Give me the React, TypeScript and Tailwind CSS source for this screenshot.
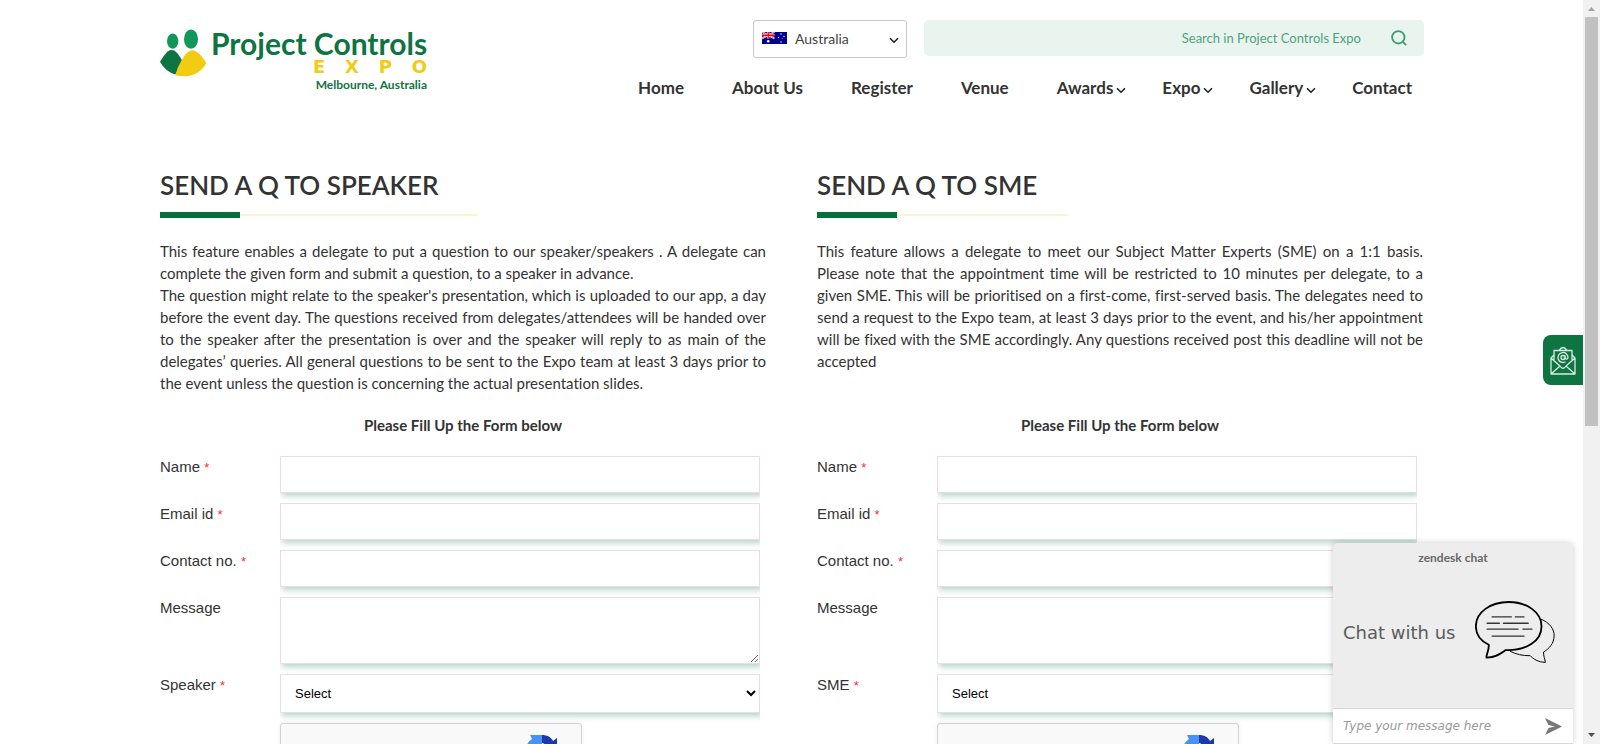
import React from "react";

const LATO = "font-['Lato',sans-serif] [font-variant-ligatures:no-common-ligatures]";
const ARIAL = "font-['Liberation_Sans',sans-serif]";
const VERDANA = "font-['DejaVu_Sans',sans-serif]";

const FIELD =
  "block w-full rounded-none border border-[#ecdcdf] bg-white shadow-[2px_3px_6px_rgba(5,120,75,0.3)] outline-none";

function Logo() {
  return (
    <a href="#home" className="mt-7 flex shrink-0 gap-1" aria-label="Project Controls Expo">
      <svg viewBox="0 0 141 146" className="mt-px h-[49px] w-[47px]" aria-hidden="true">
        <ellipse cx="38" cy="36" rx="17" ry="23" fill="#12975a" />
        <ellipse cx="93" cy="30" rx="21" ry="29" fill="#12975a" />
        <path d="M0 98Q15 72 24 66Q34 60 44 65Q58 76 68 98L46 136Q16 128 0 98Z" fill="#0d7442" />
        <path d="M46 138Q52 115 64 95Q76 72 88 66Q98 61 107 66Q126 78 139 102C120 136 85 148 46 138Z" fill="#f2cb13" />
      </svg>
      <span className="flex w-[216px] flex-col">
        <span className="text-[30px] leading-[30px] font-bold whitespace-nowrap text-[#0d7442]">Project Controls</span>
        <span className="flex w-[114px] justify-between self-end font-['DejaVu_Sans',sans-serif] text-lg leading-[18px] font-bold text-[#f2cb13]">
          <span>E</span>
          <span>X</span>
          <span>P</span>
          <span>O</span>
        </span>
        <span className="self-end text-xs leading-[18px] font-bold whitespace-nowrap text-[#0d7442]">Melbourne, Australia</span>
      </span>
    </a>
  );
}

function Chevron({ className }: { className: string }) {
  return (
    <svg viewBox="0 0 10 7" className={className} fill="none" stroke="#222" strokeWidth="1.6" aria-hidden="true">
      <path d="M1 1.2L5 5.2L9 1.2" />
    </svg>
  );
}

function Flag() {
  return (
    <svg viewBox="0 0 50 24" className="h-3 w-[25px]" aria-hidden="true">
      <rect width="50" height="24" fill="#00008b" />
      <path d="M0 0L25 13M25 0L0 13" stroke="#fff" strokeWidth="3.4" />
      <path d="M0 0L25 13M25 0L0 13" stroke="#f33" strokeWidth="1.4" />
      <path d="M12.5 0V13M0 6.5H25" stroke="#fff" strokeWidth="4.4" />
      <path d="M12.5 0V13M0 6.5H25" stroke="#f00" strokeWidth="2.6" />
      <circle cx="12.5" cy="18.5" r="2.6" fill="#fff" />
      <circle cx="38" cy="4" r="1.4" fill="#fff" />
      <circle cx="38" cy="20" r="1.4" fill="#fff" />
      <circle cx="33" cy="11" r="1.4" fill="#fff" />
      <circle cx="44" cy="9" r="1.4" fill="#fff" />
      <circle cx="40.5" cy="13" r="0.9" fill="#fff" />
    </svg>
  );
}

const NAV = [
  { label: "Home" },
  { label: "About Us" },
  { label: "Register" },
  { label: "Venue" },
  { label: "Awards", menu: true },
  { label: "Expo", menu: true },
  { label: "Gallery", menu: true },
  { label: "Contact" },
];

function Header() {
  return (
    <header className="flex justify-between pr-[159px] pl-40">
      <Logo />
      <div className="flex flex-col items-end pt-5">
        <div className="flex gap-[17px]">
          <div className="relative h-[38px] w-[154px]">
            <select
              aria-label="Country"
              className="h-full w-full appearance-none rounded-[3px] border border-[#c8c8c8] bg-white pl-[41px] text-sm text-[#444] outline-none"
            >
              <option>Australia</option>
            </select>
            <span className="pointer-events-none absolute top-3 left-[9px]"><Flag /></span>
            <Chevron className="pointer-events-none absolute top-[17px] right-2 h-[7px] w-[10px]" />
          </div>
          <form className="flex h-9 w-[500px] items-center rounded-[5px] bg-[#eaf4ef]" role="search">
            <input
              aria-label="Search"
              placeholder="Search in Project Controls Expo"
              className="h-full min-w-0 flex-1 bg-transparent text-right text-[13px] text-[#3f9b73] outline-none placeholder:text-[#4da37e]"
            />
            <button type="button" aria-label="Search" className="mr-[17px] ml-[30px]">
              <svg viewBox="0 0 16 16" className="size-4" fill="none" stroke="#3f9b73" strokeWidth="1.8" aria-hidden="true">
                <circle cx="7.3" cy="7.3" r="6.2" />
                <path d="M11.6 11.6L15.2 15.2" />
              </svg>
            </button>
          </form>
        </div>
        <nav className="mt-[18px] flex gap-9 text-[17px] leading-6 font-bold text-[#333]">
          {NAV.map((item) => (
            <a
              key={item.label}
              href="#top"
              className={item.menu ? "flex items-center gap-[3px] whitespace-nowrap" : "pr-3 whitespace-nowrap"}
            >
              {item.label}
              {item.menu && <Chevron className="mt-1 h-[7px] w-[10px]" />}
            </a>
          ))}
        </nav>
      </div>
    </header>
  );
}

function Row({ id, label, required, children }: { id: string; label: string; required?: boolean; children: React.ReactNode }) {
  return (
    <div className="flex">
      <label htmlFor={id} className={`w-[120px] shrink-0 text-[15px] leading-[22px] text-[#333] ${ARIAL}`}>
        {label} {required && <span className="text-[13px] text-red-500">*</span>}
      </label>
      <div className="min-w-0 flex-1 overflow-hidden pb-[10px]">{children}</div>
    </div>
  );
}

function Captcha() {
  return (
    <div className="ml-[120px] flex h-[78px] w-[302px] justify-end rounded-[3px] border border-[#d3d3d3] bg-[#f9f9f9] pt-[11px] pr-6 shadow-[0_0_4px_rgba(0,0,0,0.08)]">
      <svg viewBox="0 0 32 32" className="size-8" aria-hidden="true">
        <path d="M17 0H5L7 4A16 16 0 0 0 0 16H9L17 9Z" fill="#4a90f5" />
        <path d="M17 0C22 0 26 2 28 6L32 3V16H17L22 11C20 9 18 8 17 8Z" fill="#1c3aa9" />
        <path d="M0 16V30L4 26A16 16 0 0 0 28 25L23 20A9 9 0 0 1 10 20L14 16Z" fill="#ababab" />
      </svg>
    </div>
  );
}

function QuestionForm({ prefix, title, choice, children }: { prefix: string; title: string; choice: string; children: React.ReactNode }) {
  return (
    <section className="flex flex-col">
      <h2 className="relative w-fit text-[26px] leading-8 font-semibold whitespace-nowrap text-[#333]">{title}
        <span className="absolute top-[43px] left-0 flex w-[114%] items-center">
          <span className="h-[6px] w-20 bg-[#0a6e3c]" />
          <span className="h-[2px] flex-1 bg-[#fdf3cd]" />
        </span>
      </h2>
      <div className="mt-[39px] min-h-[154px] text-justify text-[15px] leading-[22px] text-[#333]">{children}</div>
      <h3 className="mt-5 text-center text-[15px] leading-[22px] font-bold text-[#333]">Please Fill Up the Form below</h3>
      <form className="mt-5 pr-[6px]">
        <Row id={`${prefix}-name`} label="Name" required>
          <input id={`${prefix}-name`} className={`h-[37px] px-3 ${FIELD}`} />
        </Row>
        <Row id={`${prefix}-email`} label="Email id" required>
          <input id={`${prefix}-email`} type="email" className={`h-[37px] px-3 ${FIELD}`} />
        </Row>
        <Row id={`${prefix}-contact`} label="Contact no." required>
          <input id={`${prefix}-contact`} type="tel" className={`h-[37px] px-3 ${FIELD}`} />
        </Row>
        <Row id={`${prefix}-message`} label="Message">
          <textarea id={`${prefix}-message`} className={`h-[67px] px-3 ${FIELD}`} />
        </Row>
        <Row id={`${prefix}-choice`} label={choice} required>
          <select id={`${prefix}-choice`} className={`h-[39px] pl-[10px] text-[13px] text-black ${ARIAL} ${FIELD}`}>
            <option>Select</option>
          </select>
        </Row>
        <Captcha />
      </form>
    </section>
  );
}

function ChatWidget() {
  return (
    <aside className="absolute right-[10px] bottom-0 flex h-[201px] w-60 flex-col rounded-t-[5px] bg-[#ededed] shadow-[0_0_6px_rgba(0,0,0,0.2)]">
      <p className="pt-[7px] text-center text-xs leading-4 font-bold text-[#686868]">zendesk chat</p>
      <div className="flex flex-1 items-center justify-between pr-[18px] pb-[9px] pl-[10px]">
        <p className={`text-lg text-[#5c5c5c] ${VERDANA}`}>Chat with us</p>
        <svg viewBox="0 0 240 190" className="h-[63px] w-20" fill="none" stroke="#000" strokeLinecap="round" strokeLinejoin="round" aria-hidden="true">
          <path d="M199 55C224 65 239 85 238 106C237 128 224 143 206 154C206 166 210 176 212 185C190 185 174 174 166 165C142 165 124 161 106 152" strokeWidth="3" />
          <path d="M101 3C156 3 200 34 200 76C200 120 156 150 92 148C78 158 62 171 34 171C32 165 42 148 41 132C15 120 2 100 2 76C2 34 46 3 101 3Z" strokeWidth="5.5" />
          <path d="M51 48H109M121 48H147M36 67H73M85 67H160M36 85H129M144 85H171M51 106H147" stroke="#333" strokeWidth="4" />
        </svg>
      </div>
      <form className="flex h-9 items-center border-y border-[#d8d8d8] bg-white pr-[11px] pl-[10px]">
        <input
          aria-label="Message"
          placeholder="Type your message here"
          className={`min-w-0 flex-1 text-xs italic outline-none placeholder:text-[#9a9a9a] ${VERDANA}`}
        />
        <button type="button" aria-label="Send">
          <svg viewBox="0 0 17 17" className="size-[17px]" fill="#777" aria-hidden="true">
            <path d="M0 0L17 8.5L0 17L3.5 10L10 8.5L3.5 7Z" />
          </svg>
        </button>
      </form>
    </aside>
  );
}

function ContactTab() {
  return (
    <a href="#contact" aria-label="Email us" className="absolute top-[335px] right-0 flex h-[50px] w-10 items-center justify-center rounded-l-lg bg-[#0d7442]">
      <svg viewBox="0 0 26 29" className="h-[29px] w-[26px]" fill="none" stroke="#d9ece2" strokeWidth="1.3" strokeLinejoin="round" aria-hidden="true">
        <path d="M4 14V4.5H22V14M9 4.5Q13 -1.5 17 4.5" />
        <path d="M4 9L1 12V28H25V12L22 9M1 12L10 20M25 12L16 20M1 28L10 20M25 28L16 20M10 20Q13 24.5 16 20" />
        <circle cx="13" cy="11.5" r="2" />
        <path d="M15 9.5V12.5Q17.5 14 18 11.5A5 5 0 1 0 15.5 15.8" />
      </svg>
    </a>
  );
}

function ScrollTrack() {
  return (
    <div className="flex w-[17px] shrink-0 flex-col items-center bg-[#f1f1f1]" aria-hidden="true">
      <svg viewBox="0 0 17 17" className="size-[17px] shrink-0" fill="#a3a3a3"><path d="M5 11L8.5 7L12 11Z" /></svg>
      <div className="h-[55%] w-[13px] bg-[#c1c1c1]" />
      <svg viewBox="0 0 17 17" className="mt-auto size-[17px] shrink-0" fill="#505050"><path d="M5 6L8.5 10L12 6Z" /></svg>
    </div>
  );
}

export default function App() {
  return (
    <div className={`flex h-screen overflow-hidden bg-white ${LATO}`}>
      <div className="relative min-w-0 flex-1 overflow-hidden">
        <Header />
        <main className="mt-[69px] grid grid-cols-2 gap-[51px] px-40">
          <QuestionForm prefix="speaker" title="SEND A Q TO SPEAKER" choice="Speaker">
            <p>
              This feature enables a delegate to put a question to our speaker/speakers . A delegate can complete the
              given form and submit a question, to a speaker in advance.
            </p>
            <p>
              The question might relate to the speaker's presentation, which is uploaded to our app, a day before the
              event day. The questions received from delegates/attendees will be handed over to the speaker after the
              presentation is over and the speaker will reply to as main of the delegates’ queries. All general
              questions to be sent to the Expo team at least 3 days prior to the event unless the question is
              concerning the actual presentation slides.
            </p>
          </QuestionForm>
          <QuestionForm prefix="sme" title="SEND A Q TO SME" choice="SME">
            <p>
              This feature allows a delegate to meet our Subject Matter Experts (SME) on a 1:1 basis. Please note that
              the appointment time will be restricted to 10 minutes per delegate, to a given SME. This will be
              prioritised on a first-come, first-served basis. The delegates need to send a request to the Expo team,
              at least 3 days prior to the event, and his/her appointment will be fixed with the SME accordingly. Any
              questions received post this deadline will not be accepted
            </p>
          </QuestionForm>
        </main>
        <ContactTab />
        <ChatWidget />
      </div>
      <ScrollTrack />
    </div>
  );
}
